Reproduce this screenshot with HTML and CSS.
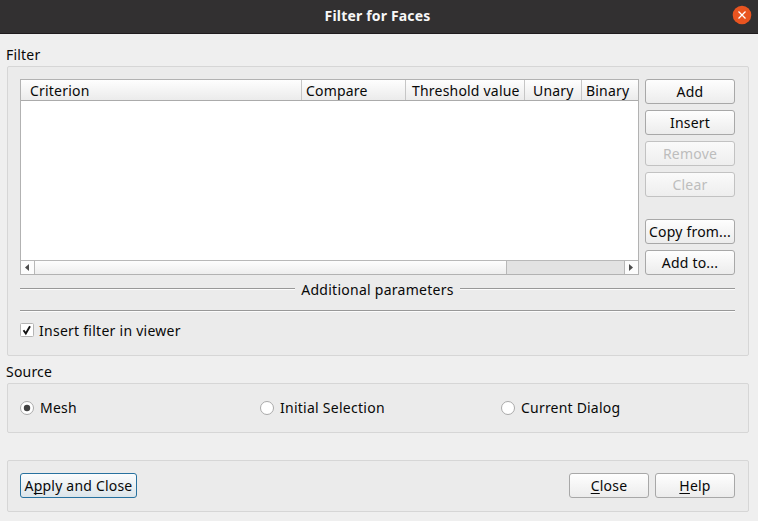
FILE: index.html
```html
<!DOCTYPE html>
<html lang="en">
<head>
<meta charset="utf-8">
<title>Filter for Faces</title>
<link rel="stylesheet" href="styles.css">
</head>
<body>
<div class="dialog">
  <header class="titlebar">
    <span></span>
    <h1 class="title">Filter for Faces</h1>
    <svg class="window-close" viewBox="0 0 20 20"><circle cx="10" cy="10" r="9.3" fill="#e95420"/><path d="M6.500 6.500l7 7M13.500 6.500l-7 7" stroke="#fff" stroke-width="1.300"/></svg>
  </header>

  <div class="group-label filter-label"><span>Filter</span></div>
  <section class="group filter-group">
    <div class="filter-main">
      <div class="table">
        <div class="thead">
          <div class="th criterion"><span>Criterion</span></div>
          <div class="th compare"><span>Compare</span></div>
          <div class="th threshold"><span>Threshold value</span></div>
          <div class="th unary"><span>Unary</span></div>
          <div class="th binary"><span>Binary</span></div>
        </div>
        <div class="tbody"></div>
        <div class="scrollbar">
          <div class="arrow arrow-left"><svg viewBox="0 0 13 13"><path d="M8 3v7L4 6.500z" fill="#4c4c4c"/></svg></div>
          <div class="handle"></div>
          <div class="track"></div>
          <div class="arrow arrow-right"><svg viewBox="0 0 13 13"><path d="M4 3v7l4-3.500z" fill="#4c4c4c"/></svg></div>
        </div>
      </div>
      <div class="side">
        <div class="button"><span>Add</span></div>
        <div class="button"><span>Insert</span></div>
        <div class="button disabled"><span>Remove</span></div>
        <div class="button disabled"><span>Clear</span></div>
        <div class="button push"><span>Copy from...</span></div>
        <div class="button"><span>Add to...</span></div>
      </div>
    </div>
    <div class="divider">
      <i class="rule"></i><span class="wide">Additional parameters</span><i class="rule"></i>
    </div>
    <div class="rule bottom-rule"></div>
    <div class="option check-option">
      <svg class="mark" viewBox="0 0 14 14"><rect x=".5" y=".5" width="13" height="13" rx="1" fill="#fff" stroke="#b5b5b5"/><path d="M3.500 7.300l2.300 3.200L10 3.200" fill="none" stroke="#111" stroke-width="1.900"/></svg>
      <span class="wide">Insert filter in viewer</span>
    </div>
  </section>

  <div class="group-label source-label"><span>Source</span></div>
  <section class="group source-group">
    <div class="option">
      <svg class="mark" viewBox="0 0 14 14"><circle cx="7" cy="7" r="6.500" fill="#fff" stroke="#a9a9a9"/><circle cx="7" cy="7" r="3.200" fill="#414141"/></svg>
      <span>Mesh</span>
    </div>
    <div class="option">
      <svg class="mark" viewBox="0 0 14 14"><circle cx="7" cy="7" r="6.500" fill="#fff" stroke="#a9a9a9"/></svg>
      <span class="wide">Initial Selection</span>
    </div>
    <div class="option">
      <svg class="mark" viewBox="0 0 14 14"><circle cx="7" cy="7" r="6.500" fill="#fff" stroke="#a9a9a9"/></svg>
      <span>Current Dialog</span>
    </div>
  </section>

  <footer class="group footer">
    <div class="button primary"><span>A<u>p</u>ply and Close</span></div>
    <div class="button close"><span><u>C</u>lose</span></div>
    <div class="button help"><span><u>H</u>elp</span></div>
  </footer>
</div>
</body>
</html>
```
FILE: styles.css
```css
* { box-sizing: border-box; }
body {
  margin: 0;
  background: #efefef;
  color: #080808;
  font: 14px/20px "Noto Sans", sans-serif;
  letter-spacing: 0.2px;
}
span { white-space: nowrap; }
svg { display: block; flex: none; }
.wide { letter-spacing: 0.26px; }
.dialog { width: 758px; height: 521px; overflow: hidden; }

.titlebar {
  display: grid;
  grid-template-columns: 26px 1fr 26px;
  align-items: center;
  height: 34px;
  padding-bottom: 3px;
  background: #323031;
  border-bottom: 1px solid #1f1b1d;
}
.title {
  margin: 0;
  padding: 2px 3px 0 0;
  text-align: center;
  color: #f7f7f7;
  font-size: 14px;
  line-height: 20px;
  font-weight: 700;
  letter-spacing: 0.17px;
}
.window-close { width: 20px; height: 20px; }

.group-label { padding-left: 6px; height: 20px; }
.filter-label { margin-top: 11px; }
.source-label { margin-top: 6px; }
.group {
  width: 742px;
  margin-left: 7px;
  padding: 12px;
  border: 1px solid #d6d6d6;
  border-radius: 2px;
  background: #ebebeb;
}
.filter-group { height: 290px; margin-top: 1px; }
.filter-main { display: flex; gap: 6px; height: 196px; }

.table {
  display: flex;
  flex-direction: column;
  width: 619px;
  border: 1px solid #b2b2b2;
  background: #fff;
}
.thead {
  display: flex;
  height: 21px;
  line-height: 22px;
  border-bottom: 1px solid #ababab;
  background: linear-gradient(#fefefe, #ebebeb);
}
.th { height: 20px; border-right: 1px solid #c6c6c6; }
.criterion { width: 281px; padding-left: 9px; }
.compare { width: 104px; padding-left: 4px; }
.threshold { width: 119px; padding-left: 6px; }
.unary { width: 57px; padding-left: 8px; }
.binary { flex: 1; padding-left: 4px; border-right: 0; }
.tbody { flex: 1; }
.scrollbar { display: flex; height: 14px; border-top: 1px solid #b8b8b8; background: #e2e2e2; }
.arrow { width: 14px; background: #fcfcfc; }
.arrow svg { width: 13px; height: 13px; }
.arrow-left { border-right: 1px solid #b8b8b8; }
.arrow-right { border-left: 1px solid #b8b8b8; }
.handle { width: 472px; border-right: 1px solid #b8b8b8; background: linear-gradient(#fdfdfd, #eee); }
.track { flex: 1; }

.side { display: flex; flex-direction: column; gap: 6px; width: 90px; }
.push { margin-top: auto; }
.button {
  display: flex;
  justify-content: center;
  height: 25px;
  padding-top: 2px;
  border: 1px solid #a8a8a8;
  border-radius: 3px;
  background: linear-gradient(#fefefe, #ececec);
}
.disabled { color: #bdbdbd; border-color: #c2c2c2; background: linear-gradient(#fafafa, #eee); }
.primary { width: 117px; border-color: #27719f; background: linear-gradient(#fbfcfd, #dce5ea); }
.close { width: 80px; margin-left: auto; }
.help { width: 80px; margin-left: 6px; }
u { text-decoration-thickness: 1px; text-underline-offset: 2px; text-decoration-skip-ink: none; }

.divider { display: flex; align-items: center; justify-content: space-between; height: 20px; margin-top: 4px; width: 715px; }
.divider span { padding-top: 2px; }
.rule { width: 275px; height: 2px; background: #989898; border-bottom: 1px solid #fcfcfc; }
.divider .rule { margin-bottom: 1px; }
.bottom-rule { width: 715px; margin-top: 11px; }
.option { display: flex; align-items: center; }
.mark { width: 14px; height: 14px; margin-right: 6px; }
.source-group .mark { margin-bottom: 1px; }
.check-option { height: 20px; margin-top: 8px; }
.check-option .mark { margin-right: 5px; }
.check-option span { padding-top: 2px; }

.source-group {
  display: grid;
  grid-template-columns: 240px 241px 1fr;
  height: 50px;
  margin-top: 1px;
  padding-top: 0;
  padding-bottom: 0;
}
.footer { display: flex; height: 52px; margin-top: 27px; padding-right: 13px; }
```
